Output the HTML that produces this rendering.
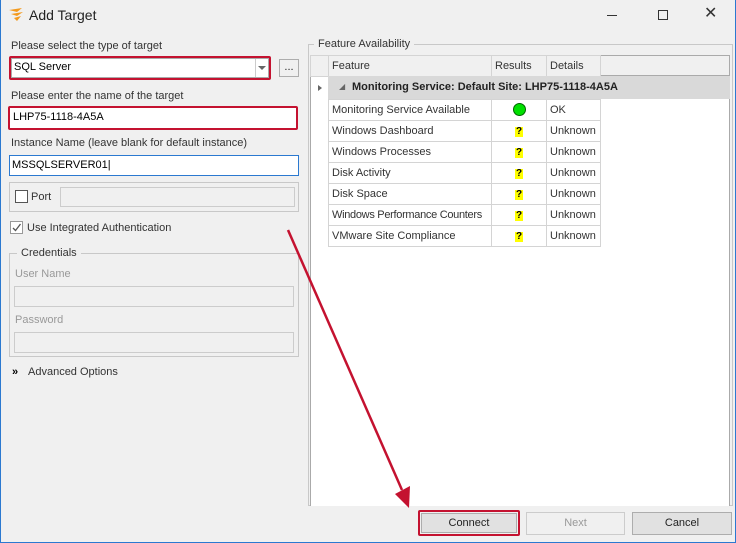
<!DOCTYPE html>
<html><head><meta charset="utf-8"><style>
*{box-sizing:border-box;margin:0;padding:0}
body{width:736px;height:543px;background:#f0f0f0;font-family:"Liberation Sans",sans-serif;font-size:11px;color:#222;position:relative;overflow:hidden}
.a{position:absolute}
.win{position:absolute;left:0;top:0;width:736px;height:543px;border:1px solid #2b79d0;border-top:none}
.inp{position:absolute;background:#fff;border:1px solid #aaa;padding:3px 2px;font-size:11px;color:#000}
.dis{background:#f0f0f0;border:1px solid #ccc}
.red{position:absolute;border:2px solid #c41230;border-radius:2px}
.lbl{position:absolute;font-size:11px;color:#333;white-space:nowrap}
.grp{position:absolute;border:1px solid #c8c8c8}
.cb{position:absolute;width:13px;height:13px;border:1px solid #555;background:#fff}
.btn{position:absolute;height:23px;border:1px solid #adadad;background:#e1e1e1;text-align:center;line-height:21px;font-size:11px}
table{border-collapse:collapse;font-size:11px;table-layout:fixed}
td{border:1px solid #d4d4d4;height:21px;line-height:19px;padding:0 3px;color:#333;white-space:nowrap;overflow:hidden}
.q{display:inline-block;font-weight:bold;color:#000;background:#ff0;font-size:10px;line-height:10px;padding:0 1px}
</style></head><body>
<div class="win"></div>
<svg class="a" style="left:8px;top:8px" width="18" height="14" viewBox="0 0 18 14"><path d="M1 2 L14 0 L9 4 Z M3 6 L15 4 L9 8Z M6 10 L13 8 L9 13Z" fill="#f39a1e"/></svg>
<div class="a" style="left:29px;top:7px;font-size:14px;color:#222">Add Target</div>
<div class="a" style="left:607px;top:15px;width:10px;height:1px;background:#333"></div>
<div class="a" style="left:658px;top:10px;width:10px;height:10px;border:1px solid #333"></div>
<div class="a" style="left:704px;top:3px;font-size:16px;color:#333">✕</div>

<div class="lbl" style="left:11px;top:40px">Please select the type of target</div>
<div class="inp" style="left:11px;top:58px;width:258px;height:20px;padding:2px 2px">SQL Server</div>
<div class="a" style="left:255px;top:59px;width:13px;height:18px;border-left:1px solid #ccc"></div>
<div class="a" style="left:258px;top:66px;border:4px solid transparent;border-top:4px solid #666"></div>
<div class="red" style="left:9px;top:56px;width:262px;height:24px"></div>
<div class="btn" style="left:279px;top:59px;width:20px;height:18px;line-height:14px;background:#f0f0f0">...</div>

<div class="lbl" style="left:11px;top:90px">Please enter the name of the target</div>
<div class="inp" style="left:10px;top:108px;width:286px;height:20px;padding:2px 2px;border-color:#fff">LHP75-1118-4A5A</div>
<div class="red" style="left:8px;top:106px;width:290px;height:24px"></div>

<div class="lbl" style="left:11px;top:137px">Instance Name (leave blank for default instance)</div>
<div class="inp" style="left:9px;top:155px;width:290px;height:21px;border-color:#2b79d0;padding:3px 2px">MSSQLSERVER01|</div>

<div class="grp" style="left:9px;top:182px;width:290px;height:30px"></div>
<div class="cb" style="left:15px;top:190px"></div>
<div class="lbl" style="left:31px;top:191px">Port</div>
<div class="inp dis" style="left:60px;top:187px;width:235px;height:20px"></div>

<div class="cb" style="left:10px;top:221px;border-color:#999"><svg width="11" height="11" style="position:absolute;left:0;top:0"><path d="M2 6 L4.5 8.5 L9.5 2" stroke="#555" stroke-width="1.3" fill="none"/></svg></div>
<div class="lbl" style="left:27px;top:222px">Use Integrated Authentication</div>

<div class="grp" style="left:9px;top:253px;width:290px;height:104px"></div>
<div class="lbl" style="left:17px;top:247px;background:#f0f0f0;padding:0 4px">Credentials</div>
<div class="lbl" style="left:15px;top:268px;color:#999">User Name</div>
<div class="inp dis" style="left:14px;top:286px;width:280px;height:21px"></div>
<div class="lbl" style="left:15px;top:314px;color:#999">Password</div>
<div class="inp dis" style="left:14px;top:332px;width:280px;height:21px"></div>
<div class="lbl" style="left:12px;top:366px;font-weight:bold;color:#000">»</div>
<div class="lbl" style="left:28px;top:366px">Advanced Options</div>

<div class="grp" style="left:308px;top:44px;width:425px;height:462px"></div>
<div class="lbl" style="left:314px;top:38px;background:#f0f0f0;padding:0 4px">Feature Availability</div>
<div class="a" style="left:310px;top:55px;width:420px;height:451px;background:#fff;border:1px solid #aaa;border-bottom:none"></div>
<div class="a" style="left:311px;top:56px;width:418px;height:20px;background:#f0f0f0;border-bottom:1px solid #aaa"></div>
<table class="a" style="left:310px;top:55px;width:290px">
<tr style="background:#f0f0f0"><td style="width:18px;height:20px"></td><td style="width:163px;height:20px">Feature</td><td style="width:55px">Results</td><td style="width:54px">Details</td></tr>
</table>
<div class="a" style="left:328px;top:76px;width:402px;height:23px;background:#d9d9d9"></div>
<div class="a" style="left:318px;top:85px;border:3px solid transparent;border-left:4px solid #666"></div>
<div class="a" style="left:339px;top:82px;font-size:8px;color:#666">◢</div>
<div class="a" style="left:352px;top:81px;font-weight:bold;font-size:11px;color:#222">Monitoring Service: Default Site: LHP75-1118-4A5A</div>
<table class="a" style="left:328px;top:99px;width:272px">
<tr><td style="width:163px">Monitoring Service Available</td><td style="width:55px;text-align:center"><span style="display:inline-block;width:13px;height:13px;border-radius:50%;background:#00e000;border:1px solid #060;vertical-align:middle"></span></td><td style="width:54px">OK</td></tr>
<tr><td>Windows Dashboard</td><td style="text-align:center"><span class="q">?</span></td><td>Unknown</td></tr>
<tr><td>Windows Processes</td><td style="text-align:center"><span class="q">?</span></td><td>Unknown</td></tr>
<tr><td>Disk Activity</td><td style="text-align:center"><span class="q">?</span></td><td>Unknown</td></tr>
<tr><td>Disk Space</td><td style="text-align:center"><span class="q">?</span></td><td>Unknown</td></tr>
<tr><td style="letter-spacing:-0.3px">Windows Performance Counters</td><td style="text-align:center"><span class="q">?</span></td><td>Unknown</td></tr>
<tr><td>VMware Site Compliance</td><td style="text-align:center"><span class="q">?</span></td><td>Unknown</td></tr>
</table>

<div class="btn" style="left:421px;top:513px;width:96px;height:20px;line-height:18px">Connect</div>
<div class="red" style="left:418px;top:510px;width:102px;height:26px"></div>
<div class="btn" style="left:526px;top:512px;width:99px;color:#999;background:#f0f0f0;border-color:#ccc">Next</div>
<div class="btn" style="left:632px;top:512px;width:100px">Cancel</div>

<svg class="a" style="left:0;top:0" width="736" height="543"><line x1="288" y1="230" x2="402" y2="490" stroke="#c41230" stroke-width="2.5"/><path d="M395 494 L410 486 L409 508 Z" fill="#c41230"/></svg>
</body></html>
